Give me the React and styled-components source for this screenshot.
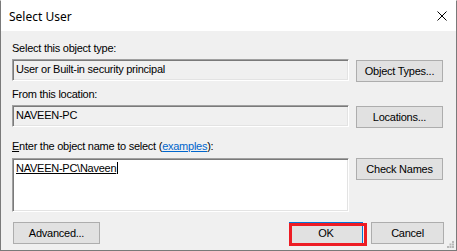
import React from "react";
import styled, { createGlobalStyle } from "styled-components";

const Global = createGlobalStyle`
  html, body { margin: 0; padding: 0; background: #fff; }
  * { box-sizing: border-box; }
`;

const Window = styled.div`
  width: 457px;
  height: 251px;
  display: flex;
  flex-direction: column;
  border: 1px solid #7a7a7a;
  border-top-color: #ffffff;
  background: #f0f0f0;
  font-family: "Liberation Sans", Arial, sans-serif;
  font-size: 11px;
  letter-spacing: -0.25px;
  color: #000;
  position: relative;
  overflow: hidden;
`;

const TitleBar = styled.div`
  height: 30px;
  flex: none;
  background: #fff;
  display: flex;
  align-items: center;
  justify-content: space-between;
  padding: 0 9px 0 8px;
`;

const Title = styled.span`
  font-family: "Noto Sans", "Open Sans", sans-serif;
  font-size: 12px;
  letter-spacing: 0;
  color: #000;
`;

const Close = styled.svg`
  width: 10px;
  height: 10px;
`;

const Body = styled.div`
  flex: 1;
  display: flex;
  flex-direction: column;
  padding: 11px 12px 0 11px;
`;

const Label = styled.div`
  height: 13px;
  line-height: 13px;
  margin-top: ${(p) => p.$gap || 0}px;
  white-space: nowrap;
`;

const Row = styled.div`
  display: flex;
  align-items: flex-start;
  gap: 7px;
  margin-top: ${(p) => p.$gap || 0}px;
`;

const Field = styled.div`
  width: 337px;
  height: ${(p) => p.$h || 22}px;
  background: ${(p) => (p.$white ? "#fff" : "#f0f0f0")};
  border: 1px solid;
  border-color: #a0a0a0 #ffffff #ffffff #a0a0a0;
  box-shadow: inset 1px 1px 0 #7a7a7a, inset -1px -1px 0 #e3e3e3;
  padding: 3px 0 0 3px;
  line-height: 13px;
  white-space: nowrap;
`;

const Button = styled.div`
  width: ${(p) => p.$w || 87}px;
  height: 22px;
  margin-top: ${(p) => p.$top || 0}px;
  background: #e1e1e1;
  border: 1px solid ${(p) => (p.$focus ? "#0078d7" : "#adadad")};
  display: flex;
  align-items: center;
  justify-content: center;
  position: relative;
  flex: none;
`;

const Highlight = styled.div`
  position: absolute;
  left: -1px;
  top: 0px;
  width: 78px;
  height: 23px;
  border: 3px solid #ed1c24;
  pointer-events: none;
`;

const Link = styled.span`
  color: #0066cc;
  text-decoration: underline;
`;

const Key = styled.span`
  text-decoration: underline;
`;

const Resolved = styled.span`
  text-decoration: underline;
  border-right: 1px solid #000;
  padding-right: 1px;
`;

const Footer = styled.div`
  display: flex;
  align-items: center;
  margin-top: 10px;
  padding-left: 1px;
`;

const Spacer = styled.div`
  flex: 1;
`;

const Gap = styled.div`
  width: 8px;
`;

const Grip = styled.svg`
  position: absolute;
  right: 2px;
  bottom: 2px;
  width: 7px;
  height: 7px;
`;

export default function App() {
  return (
    <>
      <Global />
      <Window>
        <TitleBar>
          <Title>Select User</Title>
          <Close viewBox="0 0 10 10">
            <path d="M0.5 0.5 L9.5 9.5 M9.5 0.5 L0.5 9.5" stroke="#000" strokeWidth="1" fill="none" />
          </Close>
        </TitleBar>
        <Body>
          <Label>Select this object type:</Label>
          <Row $gap={4}>
            <Field>User or Built-in security principal</Field>
            <Button $top={1}>Object Types...</Button>
          </Row>
          <Label $gap={6}>From this location:</Label>
          <Row $gap={4}>
            <Field>NAVEEN-PC</Field>
            <Button $top={1}>Locations...</Button>
          </Row>
          <Label $gap={12}>
            <Key>E</Key>nter the object name to select (<Link>examples</Link>):
          </Label>
          <Row $gap={5}>
            <Field $white $h={54}>
              <Resolved>NAVEEN-PC\Naveen</Resolved>
            </Field>
            <Button>Check Names</Button>
          </Row>
          <Footer>
            <Button $w={87}>Advanced...</Button>
            <Spacer />
            <Button $w={74} $focus>
              OK
              <Highlight />
            </Button>
            <Gap />
            <Button $w={73}>Cancel</Button>
          </Footer>
        </Body>
        <Grip viewBox="0 0 7 7">
          <rect x="5" y="0" width="2" height="2" fill="#b8b8b8" />
          <rect x="2.5" y="2.5" width="2" height="2" fill="#b8b8b8" />
          <rect x="5" y="2.5" width="2" height="2" fill="#b8b8b8" />
          <rect x="0" y="5" width="2" height="2" fill="#b8b8b8" />
          <rect x="2.5" y="5" width="2" height="2" fill="#b8b8b8" />
          <rect x="5" y="5" width="2" height="2" fill="#b8b8b8" />
        </Grip>
      </Window>
    </>
  );
}
